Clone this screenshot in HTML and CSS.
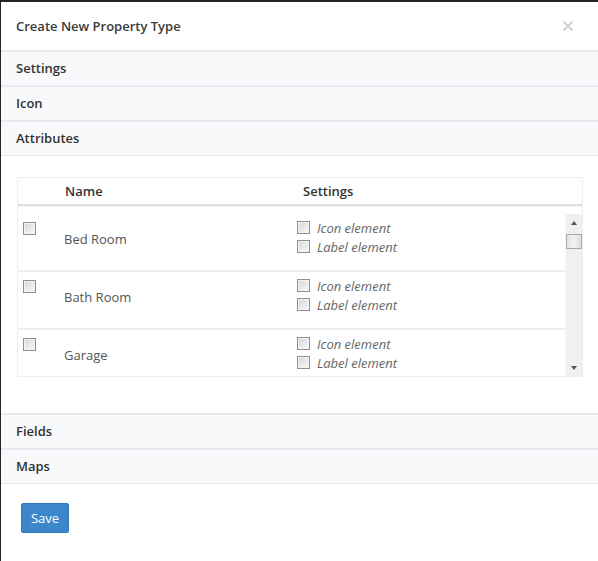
FILE: index.html
```html
<!DOCTYPE html>
<html>
<head>
<meta charset="utf-8">
<link rel="stylesheet" href="styles.css">
</head>
<body>
<div class="modal">
  <div class="modal-header">
    <div class="modal-title">Create New Property Type</div>
    <svg class="close" width="12" height="12" viewBox="0 0 12 12"><path d="M1.5 1.5 L10.5 10.5 M10.5 1.5 L1.5 10.5" stroke="#cfcfcf" stroke-width="2" fill="none"/></svg>
  </div>
  <div class="panel"><div class="panel-heading">Settings</div></div>
  <div class="panel"><div class="panel-heading">Icon</div></div>
  <div class="panel">
    <div class="panel-heading">Attributes</div>
    <div class="panel-body">
      <div class="table">
        <div class="thead">
          <div></div>
          <div class="th">Name</div>
          <div class="th">Settings</div>
        </div>
        <div class="tbody">
          <div class="rows">
            <div class="row">
              <div class="c-check"><input type="checkbox" class="cb"></div>
              <div class="c-name">Bed Room</div>
              <div class="c-set">
                <label class="opt"><input type="checkbox" class="cb"><span>Icon element</span></label>
                <label class="opt"><input type="checkbox" class="cb"><span>Label element</span></label>
              </div>
            </div>
            <div class="row">
              <div class="c-check"><input type="checkbox" class="cb"></div>
              <div class="c-name">Bath Room</div>
              <div class="c-set">
                <label class="opt"><input type="checkbox" class="cb"><span>Icon element</span></label>
                <label class="opt"><input type="checkbox" class="cb"><span>Label element</span></label>
              </div>
            </div>
            <div class="row">
              <div class="c-check"><input type="checkbox" class="cb"></div>
              <div class="c-name">Garage</div>
              <div class="c-set">
                <label class="opt"><input type="checkbox" class="cb"><span>Icon element</span></label>
                <label class="opt"><input type="checkbox" class="cb"><span>Label element</span></label>
              </div>
            </div>
          </div>
          <div class="scrollbar">
            <div class="sb-btn"><span class="tri-up"></span></div>
            <div class="sb-thumb"></div>
            <div class="sb-space"></div>
            <div class="sb-btn"><span class="tri-down"></span></div>
          </div>
        </div>
      </div>
    </div>
  </div>
  <div class="panel"><div class="panel-heading">Fields</div></div>
  <div class="panel"><div class="panel-heading">Maps</div></div>
  <div class="modal-footer">
    <button class="btn">Save</button>
  </div>
</div>
</body>
</html>
```

FILE: styles.css
```css
html, body {
  margin: 0;
  padding: 0;
  height: 100%;
}
body {
  background: #242424;
  font-family: "Open Sans", "Liberation Sans", sans-serif;
  font-size: 13px;
  color: #333;
  overflow: hidden;
}
.modal {
  margin: 2px 0 0 1px;
  background: #fff;
  height: calc(100% - 2px);
}
.modal-header {
  height: 48px;
  padding: 0 24px 0 15px;
  display: flex;
  align-items: center;
  justify-content: space-between;
  border-bottom: 1px solid #e5e5e5;
}
.modal-title {
  font-size: 13px;
  font-weight: 600;
  color: #3a3a3a;
  margin-top: -1px;
}
.close {
  display: block;
}
.panel {
  border-top: 1px solid #e7ebef;
  border-bottom: 1px solid #e7ebef;
}
.panel-heading {
  height: 33px;
  padding: 0 15px 1px;
  box-sizing: border-box;
  display: flex;
  align-items: center;
  background: #f8f9fb;
  font-weight: 600;
  font-size: 13px;
  line-height: 1;
  color: #333;
}
.panel-body {
  padding: 21px 15px 36px 16px;
  border-top: 1px solid #e7ebef;
  height: 200px;
}
.table {
  border: 1px solid #eceff2;
  height: 198px;
  display: flex;
  flex-direction: column;
}
.thead {
  display: grid;
  grid-template-columns: 39px 238px 1fr;
  height: 26px;
  border-bottom: 2px solid #e3e3e3;
}
.th {
  padding-left: 8px;
  line-height: 26px;
  font-weight: 600;
  color: #333;
}
.tbody {
  flex: 1;
  display: flex;
  min-height: 0;
  padding-top: 7px;
  border-top: 1px solid #f3f3f3;
}
.rows {
  flex: 1;
  overflow: hidden;
}
.row {
  display: grid;
  grid-template-columns: 39px 233px 1fr;
  height: 52px;
  padding-top: 4px;
  border-bottom: 2px solid #eeeeee;
}
.c-check {
  padding: 4px 0 0 5px;
}
.c-name {
  padding-left: 7px;
  margin-top: 12px;
  line-height: 18px;
  color: #555;
  font-size: 13px;
}
.c-set {
  padding-left: 7px;
  display: flex;
  flex-direction: column;
}
.opt {
  display: flex;
  align-items: center;
  height: 19px;
  font-style: italic;
  color: #666;
}
.opt span {
  margin-left: 7px;
}
.cb {
  appearance: none;
  -webkit-appearance: none;
  margin: 0;
  width: 13px;
  height: 13px;
  box-sizing: border-box;
  border: 1px solid #8e8f8f;
  background: linear-gradient(135deg, #d6d6d6 0%, #eaeaea 55%, #fafafa 100%);
  box-shadow: inset 0 0 0 1px #f4f4f4;
  display: block;
}
.scrollbar {
  width: 16px;
  background: #f0f0f0;
  border-left: 1px solid #f7f7f7;
  display: flex;
  flex-direction: column;
}
.sb-btn {
  height: 17px;
  display: flex;
  align-items: center;
  justify-content: center;
}
.tri-up {
  width: 0;
  height: 0;
  border-left: 3px solid transparent;
  border-right: 3px solid transparent;
  border-bottom: 4px solid #555;
}
.tri-down {
  width: 0;
  height: 0;
  border-left: 3px solid transparent;
  border-right: 3px solid transparent;
  border-top: 4px solid #555;
}
.sb-thumb {
  margin-top: 3px;
  height: 15px;
  box-sizing: border-box;
  border: 1px solid #a8a8a8;
  background: linear-gradient(90deg, #e4e4e4, #f2f2f2 50%, #dedede);
}
.sb-space {
  flex: 1;
}
.modal-footer {
  padding: 19px 20px;
}
.btn {
  font-family: "Open Sans", "Liberation Sans", sans-serif;
  font-size: 13px;
  color: #fff;
  background: #3b87c9;
  border: 1px solid #3178b8;
  border-radius: 2px;
  height: 30px;
  width: 48px;
  padding: 0;
  display: block;
}
```
